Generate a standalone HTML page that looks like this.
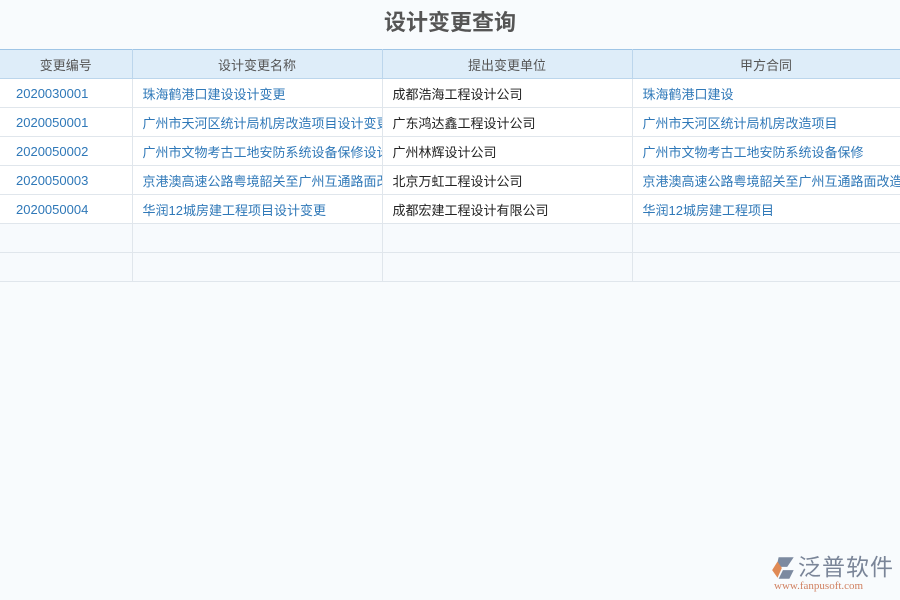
<!DOCTYPE html>
<html><head><meta charset="utf-8"><style>
body{margin:0;width:900px;height:600px;background:#f8fbfd;font-family:"Liberation Sans","Noto Sans CJK SC",sans-serif;position:relative;overflow:hidden}
h1{position:absolute;top:8px;left:0;width:900px;text-align:center;margin:0;font-size:22px;font-weight:bold;color:#555;line-height:30px}
table{position:absolute;top:49px;left:0;border-collapse:collapse;table-layout:fixed;width:900px}
td,th{height:28px;border:1px solid #e0e6ec;font-size:13px;white-space:nowrap;overflow:hidden;padding:0 0 0 10px;font-weight:normal;text-align:left}
th{background:#deedf9;color:#555;text-align:center;padding:0;border-color:#bcd6ec;border-top-color:#9fc5e6}
td{background:#fff;color:#2f78b8}
td.k{color:#222}
td.n{padding-left:16px}
tr.e td{background:#f7fafd}
td:first-child,th:first-child{border-left:none}
</style></head><body>
<h1>设计变更查询</h1>
<table>
<colgroup><col style="width:132px"><col style="width:250px"><col style="width:250px"><col style="width:268px"></colgroup>
<tr><th>变更编号</th><th>设计变更名称</th><th>提出变更单位</th><th>甲方合同</th></tr>
<tr><td class="n">2020030001</td><td>珠海鹤港口建设设计变更</td><td class="k">成都浩海工程设计公司</td><td>珠海鹤港口建设</td></tr>
<tr><td class="n">2020050001</td><td>广州市天河区统计局机房改造项目设计变更</td><td class="k">广东鸿达鑫工程设计公司</td><td>广州市天河区统计局机房改造项目</td></tr>
<tr><td class="n">2020050002</td><td>广州市文物考古工地安防系统设备保修设计变更</td><td class="k">广州林辉设计公司</td><td>广州市文物考古工地安防系统设备保修</td></tr>
<tr><td class="n">2020050003</td><td>京港澳高速公路粤境韶关至广州互通路面改造</td><td class="k">北京万虹工程设计公司</td><td>京港澳高速公路粤境韶关至广州互通路面改造项目</td></tr>
<tr><td class="n">2020050004</td><td>华润12城房建工程项目设计变更</td><td class="k">成都宏建工程设计有限公司</td><td>华润12城房建工程项目</td></tr>
<tr class="e"><td></td><td></td><td></td><td></td></tr>
<tr class="e"><td></td><td></td><td></td><td></td></tr>
</table>
<div style="position:absolute;left:768px;top:554px;width:130px;height:40px">
<svg width="28" height="26" style="position:absolute;left:2px;top:1px" viewBox="0 0 26 24"><path d="M8 2h14l-6 9H6z" fill="#7c8aa0"/><path d="M2 14l5-8 4 6-4 9z" fill="#e08a55"/><path d="M12 14h10l-4 8H8z" fill="#7c8aa0"/></svg>
<div style="position:absolute;left:30px;top:-1px;font-size:23px;color:#7a8598;line-height:28px;letter-spacing:1px">泛普软件</div>
<div style="position:absolute;left:6px;top:26px;font-family:'Liberation Serif',serif;font-size:11px;color:#d08060;line-height:12px">www.fanpusoft.com</div>
</div>
</body></html>
